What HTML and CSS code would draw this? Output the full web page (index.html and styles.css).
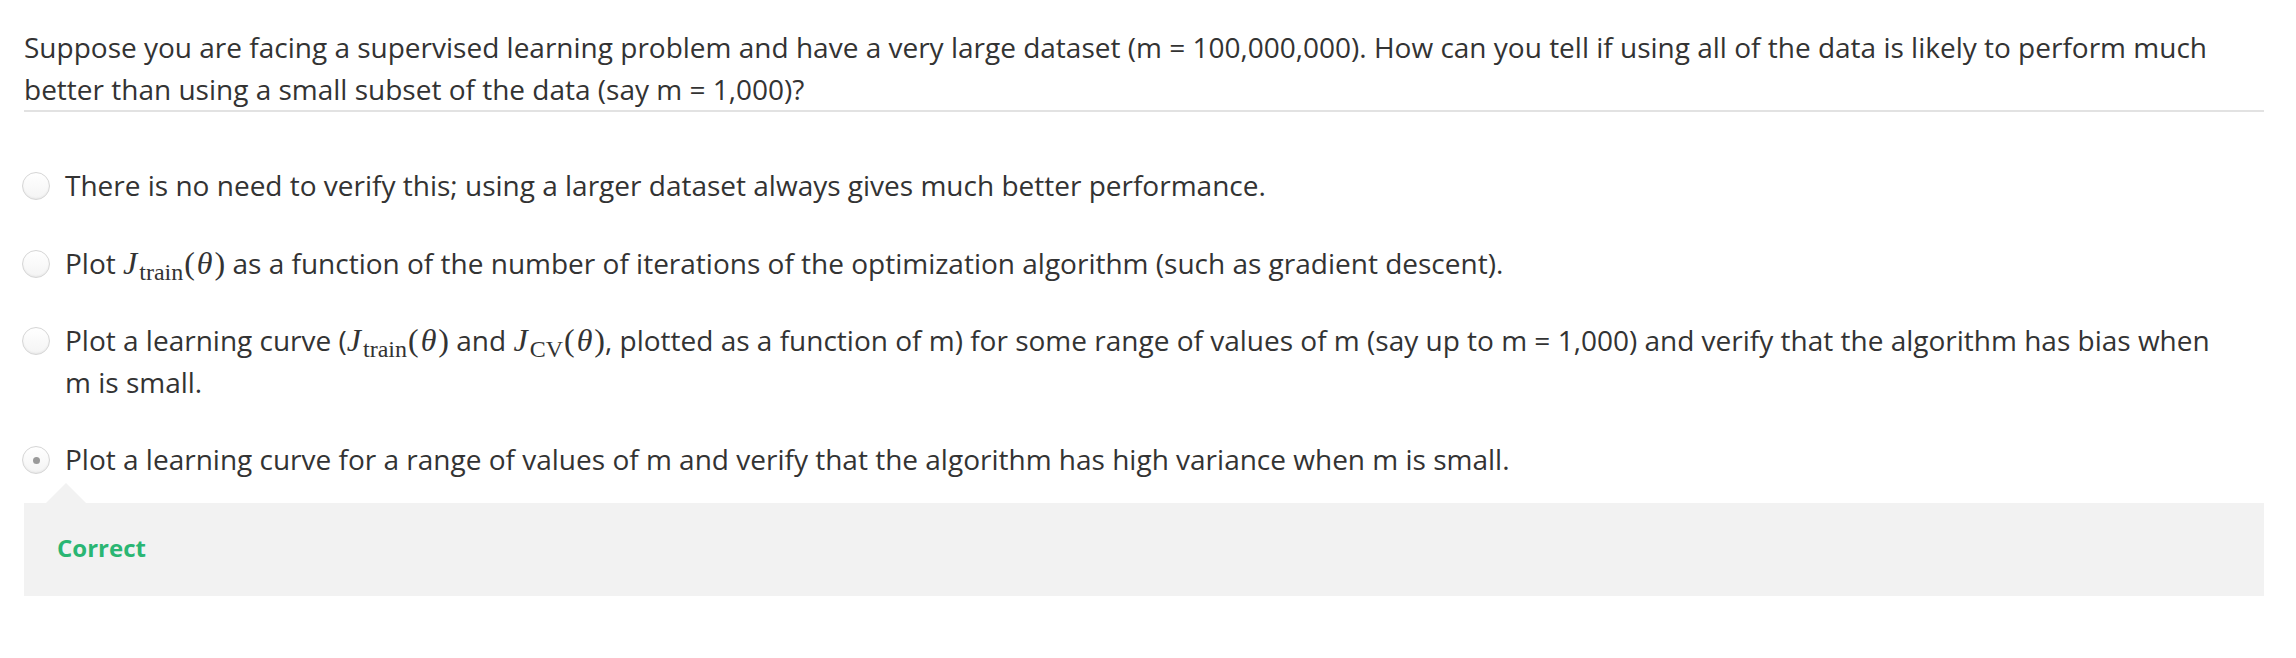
FILE: index.html
```html
<!DOCTYPE html>
<html>
<head>
<meta charset="utf-8">
<link rel="stylesheet" href="styles.css">
</head>
<body>
<div class="quiz">
  <div class="question">Suppose you are facing a supervised learning problem and have a very large dataset (m = 100,000,000). How can you tell if using all of the data is likely to perform much better than using a small subset of the data (say m = 1,000)?</div>
  <div class="options">
    <div class="option">
      <span class="radio"></span>
      <span class="label">There is no need to verify this; using a larger dataset always gives much better performance.</span>
    </div>
    <div class="option">
      <span class="radio"></span>
      <span class="label">Plot <span class="math"><i class="mi">J</i><span class="sub">train</span><span class="mo">(</span><i class="mi theta">θ</i><span class="mo">)</span></span> as a function of the number of iterations of the optimization algorithm (such as gradient descent).</span>
    </div>
    <div class="option">
      <span class="radio"></span>
      <span class="label">Plot a learning curve (<span class="math"><i class="mi">J</i><span class="sub">train</span><span class="mo">(</span><i class="mi theta">θ</i><span class="mo">)</span></span> and <span class="math"><i class="mi">J</i><span class="sub">CV</span><span class="mo">(</span><i class="mi theta">θ</i><span class="mo">)</span></span>, plotted as a function of m) for some range of values of m (say up to m = 1,000) and verify that the algorithm has bias when m is small.</span>
    </div>
    <div class="option">
      <span class="radio checked"></span>
      <span class="label">Plot a learning curve for a range of values of m and verify that the algorithm has high variance when m is small.</span>
    </div>
  </div>
  <div class="feedback">
    <span class="correct">Correct</span>
  </div>
</div>
</body>
</html>
```

FILE: styles.css
```css
html, body {
  margin: 0;
  padding: 0;
  background: #ffffff;
}

body {
  font-family: "Open Sans", "Liberation Sans", sans-serif;
  color: #333333;
}

.quiz {
  padding: 27px 32px 0 24px;
}

.question {
  font-size: 28px;
  line-height: 41.5px;
  border-bottom: 2px solid #e2e2e2;
}

.options {
  display: flex;
  flex-direction: column;
  gap: 36px;
  margin-top: 53px;
  margin-left: -2px;
}

.option {
  display: flex;
  align-items: flex-start;
  gap: 15px;
  font-size: 28px;
  line-height: 41.5px;
}

.radio {
  flex: none;
  width: 26px;
  height: 26px;
  margin-top: 7px;
  border: 1px solid #d6d6d6;
  border-radius: 50%;
  background: linear-gradient(#ffffff, #f4f4f4);
  box-shadow: inset 0 -1px 2px rgba(0, 0, 0, 0.06);
  display: flex;
  align-items: center;
  justify-content: center;
}

.radio.checked::after {
  content: "";
  width: 7px;
  height: 7px;
  border-radius: 50%;
  background: #9a9a9a;
}

.label {
  flex: 1;
  padding-right: 40px;
}

.math {
  font-family: "Liberation Serif", "DejaVu Serif", serif;
  white-space: nowrap;
  line-height: 0;
}

.mi {
  font-style: italic;
  font-size: 32px;
}

.mi.theta {
  padding: 0 2px;
}

.mo {
  font-size: 32px;
}

.sub {
  font-size: 24px;
  vertical-align: -6px;
  margin-left: 2px;
  margin-right: 1px;
}

.feedback {
  position: relative;
  margin-top: 22px;
  background: #f2f2f2;
  padding: 30px 33px 30px;
  line-height: 30px;
}

.feedback::before {
  content: "";
  position: absolute;
  top: -20px;
  left: 22px;
  border-left: 20px solid transparent;
  border-right: 20px solid transparent;
  border-bottom: 20px solid #f2f2f2;
}

.correct {
  font-size: 24px;
  font-weight: 700;
  color: #2ab673;
}
```
